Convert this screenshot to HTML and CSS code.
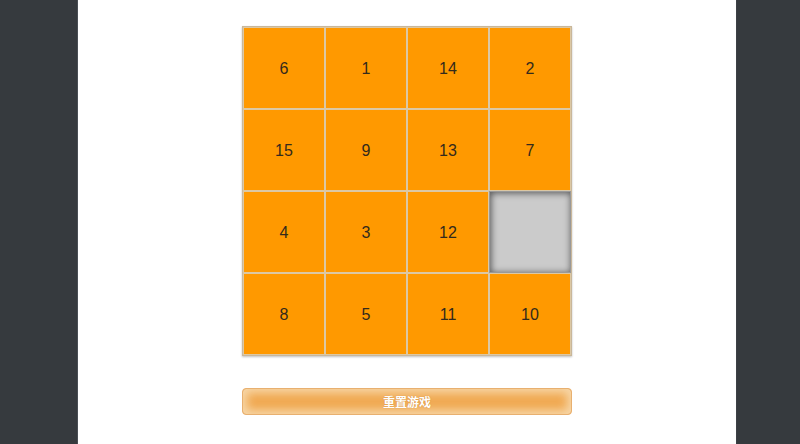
FILE: index.html
```html
<!DOCTYPE html>
<html>
<head>
<meta charset="utf-8">
<link rel="stylesheet" href="styles.css">
</head>
<body>
<div class="page">
  <div class="board">
    <div class="tile">6</div>
    <div class="tile">1</div>
    <div class="tile">14</div>
    <div class="tile">2</div>
    <div class="tile">15</div>
    <div class="tile">9</div>
    <div class="tile">13</div>
    <div class="tile">7</div>
    <div class="tile">4</div>
    <div class="tile">3</div>
    <div class="tile">12</div>
    <div class="tile empty"></div>
    <div class="tile">8</div>
    <div class="tile">5</div>
    <div class="tile">11</div>
    <div class="tile">10</div>
  </div>
  <button class="reset">重置游戏</button>
</div>
</body>
</html>
```
FILE: styles.css
```css
html, body {
  margin: 0;
  padding: 0;
  height: 100%;
}
body {
  background: #363a3e;
  font-family: "Liberation Sans", Arial, "Noto Sans CJK SC", sans-serif;
  overflow: hidden;
}
.page {
  margin-left: 78px;
  width: 658px;
  height: 100%;
  background: #fff;
  box-shadow: -1px 0 0 #4a4f55, 1px 0 0 #3d4146;
  padding-top: 26px;
  box-sizing: border-box;
  display: flex;
  flex-direction: column;
  align-items: center;
}
.board {
  display: grid;
  grid-template-columns: repeat(4, 82px);
  grid-template-rows: repeat(4, 82px);
  width: 328px;
  border: 1px solid #c9b79a;
  box-shadow: 0 1px 2px rgba(0,0,0,0.25);
}
.tile {
  box-sizing: border-box;
  background: #ff9900;
  border: 1px solid #dcc8a4;
  display: flex;
  align-items: center;
  justify-content: center;
  padding-top: 2px;
  font-size: 16px;
  color: #332a1c;
}
.tile.empty {
  background: #cbcbcb;
  border: 1px solid #999;
  box-shadow: inset 1px 1px 7px rgba(0,0,0,0.6);
}
.reset {
  margin-top: 32px;
  width: 330px;
  height: 27px;
  border: 1px solid #e8b070;
  border-radius: 4px;
  background: #f0a850;
  box-shadow: inset 0 0 10px 4px #f7d7a8;
  color: #fff;
  font-family: "Noto Sans CJK SC", sans-serif;
  font-weight: bold;
  font-size: 12px;
  padding: 0;
  text-shadow: 0 0 1px rgba(150,80,0,0.4);
}
```
